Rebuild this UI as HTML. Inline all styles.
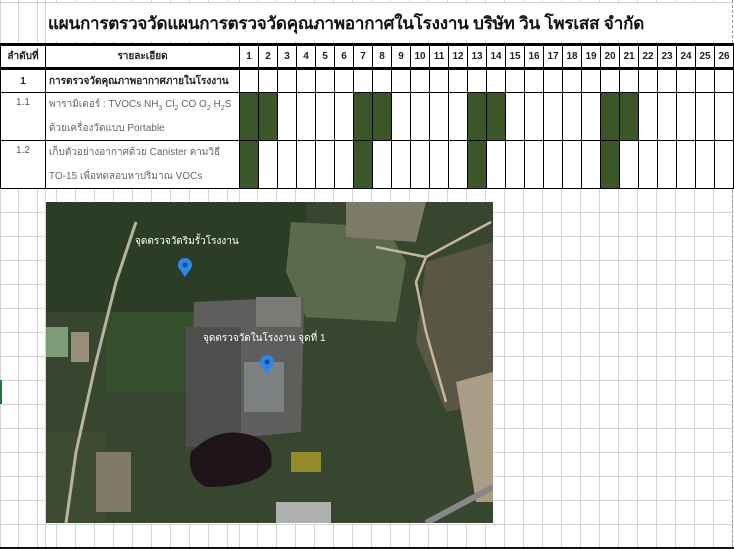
<!DOCTYPE html>
<html><head><meta charset="utf-8">
<style>
*{margin:0;padding:0;box-sizing:border-box}
body{width:734px;height:549px;overflow:hidden;background:#fff;position:relative;font-family:"Liberation Sans","DejaVu Sans",sans-serif}
.grid{position:absolute;left:0;top:0;width:733px;height:548px;
background-image:
repeating-linear-gradient(to right,transparent 0,transparent 18px,#d4d4d4 18px,#d4d4d4 19px);
background-position:239px 0;}
.hl{position:absolute;left:0;width:733px;height:1px;background:#d4d4d4}
.vl{position:absolute;top:0;width:1px;height:548px;background:#d4d4d4}
table{position:absolute;left:0;top:43px;border-collapse:collapse;table-layout:fixed;background:#fff}
td{border:1px solid #000;font-size:10px;text-align:center;color:#222;padding:0;overflow:hidden;white-space:nowrap}
tr.h td{border-top:3px solid #000;border-bottom:3px solid #000;font-weight:bold;height:24px}
td.g{background:#3b5627}
.d{color:#666;text-align:left;padding-left:3px}
.d div{height:47px;line-height:24px;overflow:hidden}
.n div{height:47px;padding-top:4px;color:#555}
sub{font-size:7px;line-height:0}
</style></head><body>
<div class="grid"></div>
<div class="vl" style="left:0"></div>
<div class="vl" style="left:45px"></div>
<div class="vl" style="left:239px"></div>
<div class="hl" style="top:2px"></div>
<div class="hl" style="top:212px"></div><div class="hl" style="top:236px"></div><div class="hl" style="top:260px"></div><div class="hl" style="top:284px"></div><div class="hl" style="top:308px"></div><div class="hl" style="top:332px"></div><div class="hl" style="top:356px"></div><div class="hl" style="top:380px"></div><div class="hl" style="top:404px"></div><div class="hl" style="top:428px"></div><div class="hl" style="top:452px"></div><div class="hl" style="top:476px"></div><div class="hl" style="top:500px"></div><div class="hl" style="top:524px"></div>
<div style="position:absolute;left:46px;top:3px;width:687px;height:38px;background:#fff"></div>
<div style="position:absolute;left:48px;top:10px;font-size:17px;font-weight:bold;color:#111;white-space:nowrap;letter-spacing:-0.2px">แผนการตรวจวัดแผนการตรวจวัดคุณภาพอากาศในโรงงาน บริษัท วิน โพรเสส จำกัด</div>
<div style="position:absolute;left:732px;top:0;width:0;height:548px;border-left:1px dashed #999"></div>
<div style="position:absolute;left:0;top:547px;width:734px;height:2px;background:#111"></div>
<div style="position:absolute;left:0;top:380px;width:2px;height:24px;background:#1d7a3c"></div>

<table>
<colgroup><col style="width:45px"><col style="width:194px">
<col span="26" style="width:19px"></colgroup>
<tr class="h"><td>ลำดับที่</td><td>รายละเอียด</td><td>1</td><td>2</td><td>3</td><td>4</td><td>5</td><td>6</td><td>7</td><td>8</td><td>9</td><td>10</td><td>11</td><td>12</td><td>13</td><td>14</td><td>15</td><td>16</td><td>17</td><td>18</td><td>19</td><td>20</td><td>21</td><td>22</td><td>23</td><td>24</td><td>25</td><td>26</td></tr>
<tr><td style="font-weight:bold;height:24px">1</td><td class="d" style="font-weight:bold;color:#222">การตรวจวัดคุณภาพอากาศภายในโรงงาน</td><td></td><td></td><td></td><td></td><td></td><td></td><td></td><td></td><td></td><td></td><td></td><td></td><td></td><td></td><td></td><td></td><td></td><td></td><td></td><td></td><td></td><td></td><td></td><td></td><td></td><td></td></tr>
<tr><td class="n"><div>1.1</div></td><td class="d"><div>พารามิเตอร์ : TVOCs NH<sub>3</sub> Cl<sub>2</sub> CO O<sub>2</sub> H<sub>2</sub>S<br>ด้วยเครื่องวัดแบบ Portable</div></td><td class="g"></td><td class="g"></td><td></td><td></td><td></td><td></td><td class="g"></td><td class="g"></td><td></td><td></td><td></td><td></td><td class="g"></td><td class="g"></td><td></td><td></td><td></td><td></td><td></td><td class="g"></td><td class="g"></td><td></td><td></td><td></td><td></td><td></td></tr>
<tr><td class="n"><div>1.2</div></td><td class="d"><div>เก็บตัวอย่างอากาศด้วย Canister ตามวิธี<br>TO-15 เพื่อทดสอบหาปริมาณ VOCs</div></td><td class="g"></td><td></td><td></td><td></td><td></td><td></td><td class="g"></td><td></td><td></td><td></td><td></td><td></td><td class="g"></td><td></td><td></td><td></td><td></td><td></td><td></td><td class="g"></td><td></td><td></td><td></td><td></td><td></td><td></td></tr>
</table>

<svg style="position:absolute;left:46px;top:202px" width="447" height="321" viewBox="0 0 447 321">
<rect width="447" height="321" fill="#37472f"/>
<rect x="0" y="0" width="260" height="110" fill="#2c3d26"/>
<polygon points="245,20 340,25 360,60 350,120 260,115 240,70" fill="#5c6a4c"/>
<polygon points="300,0 380,0 370,40 300,35" fill="#7d7a68"/>
<polygon points="380,60 447,40 447,200 400,210 370,140" fill="#5a5644"/>
<polygon points="410,180 447,170 447,300 430,300" fill="#a99d85"/>
<rect x="60" y="110" width="90" height="80" fill="#33502a"/>
<rect x="0" y="230" width="60" height="90" fill="#3f4a33"/>
<rect x="50" y="250" width="35" height="60" fill="#7f7a66"/>
<rect x="0" y="125" width="22" height="30" fill="#7f9c78"/>
<rect x="25" y="130" width="18" height="30" fill="#988f78"/>
<polygon points="148,100 258,95 255,230 145,240" fill="#5e5f5c"/>
<rect x="210" y="95" width="45" height="30" fill="#7a7a76"/>
<rect x="198" y="160" width="40" height="50" fill="#7e8184"/>
<rect x="140" y="125" width="55" height="120" fill="#4e4e4d"/>
<path d="M145,250 Q170,225 200,232 Q230,238 225,265 Q210,285 160,285 Q140,275 145,250Z" fill="#1d1318"/>
<rect x="230" y="300" width="55" height="21" fill="#afb1ae"/>
<rect x="245" y="250" width="30" height="20" fill="#958b29"/>
<path d="M90,20 L70,80 L50,160 L30,250 L20,321" stroke="#b9b39d" stroke-width="3" fill="none"/>
<path d="M330,45 L380,55 L445,20 M380,55 L370,80 L380,130 L400,200" stroke="#c8b898" stroke-width="2.5" fill="none"/>
<path d="M380,321 L447,285" stroke="#888" stroke-width="6" fill="none"/>
<circle cx="139" cy="63" r="7" fill="#2d86ea"/><polygon points="133,66 145,66 139,75" fill="#2d86ea"/><circle cx="139" cy="63" r="2.5" fill="#15458a"/>
<circle cx="221" cy="160" r="7" fill="#2d86ea"/><polygon points="215,163 227,163 221,172" fill="#2d86ea"/><circle cx="221" cy="160" r="2.5" fill="#15458a"/>
<text x="89" y="42" font-size="10" fill="#fff" font-family="Liberation Sans, DejaVu Sans, sans-serif">จุดตรวจวัดริมรั้วโรงงาน</text>
<text x="157" y="139" font-size="10" fill="#fff" font-family="Liberation Sans, DejaVu Sans, sans-serif">จุดตรวจวัดในโรงงาน จุดที่ 1</text>
</svg>
</body></html>
